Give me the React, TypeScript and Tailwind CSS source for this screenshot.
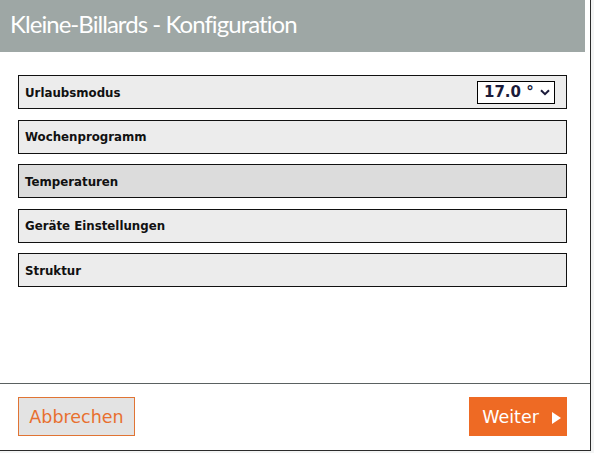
import React from 'react';

const rows = [
  { label: 'Urlaubsmodus', select: true },
  { label: 'Wochenprogramm' },
  { label: 'Temperaturen', active: true },
  { label: 'Geräte Einstellungen' },
  { label: 'Struktur' },
];

export default function App() {
  return (
    <div className="w-[594px] h-[453px] bg-[#f3f4f4] overflow-hidden">
      <div className="w-[591px] h-[451px] bg-white border-r border-b border-[#2b2b2b] flex flex-col">
        <div className="h-[52px] mr-[5px] bg-[#9ea7a5] flex items-center pl-[10px] pb-[4px]">
          <h1 className="text-white text-[24px] tracking-[-0.95px] font-['Lato',sans-serif]">
            Kleine-Billards - Konfiguration
          </h1>
        </div>

        <div className="flex-1 pt-[23px] pl-[18px] flex flex-col gap-[10.5px]">
          {rows.map((r) => (
            <div
              key={r.label}
              className={`w-[549px] h-[34px] border border-[#111] flex items-center justify-between pl-[6px] pr-[11px] ${r.active ? 'bg-[#dcdcdc]' : 'bg-[#ececec]'}`}
            >
              <span className="text-[11.8px] font-bold text-[#111] font-['DejaVu_Sans',sans-serif] pt-[3px]">{r.label}</span>
              {r.select && (
                <div className="w-[78px] h-[23px] border border-black bg-white flex items-center pl-[6px] gap-[6px]">
                  <span className="text-[15px] font-bold text-[#1b1b3a] font-['DejaVu_Sans',sans-serif] leading-none">17.0 °</span>
                  <svg width="10" height="7" viewBox="0 0 10 7" fill="none">
                    <path d="M1 1.2l4 4 4-4" stroke="#1b1b3a" strokeWidth="2" />
                  </svg>
                </div>
              )}
            </div>
          ))}
        </div>

        <div className="h-[67px] border-t border-[#5a6161] flex items-start justify-between pt-[13px] pl-[18px] pr-[23px]">
          <button className="w-[117px] h-[39px] bg-[#e3e3e3] border border-[#e07434] text-[#e8702f] text-[17.5px] font-['DejaVu_Sans',sans-serif] pt-[2px]">
            Abbrechen
          </button>
          <button className="w-[98px] h-[39px] bg-[#ee6a24] text-white text-[17.5px] font-['DejaVu_Sans',sans-serif] flex items-center justify-center gap-[13px] pl-[7px] pt-[2px]">
            Weiter
            <svg width="9" height="12" viewBox="0 0 9 12">
              <path d="M0 0l9 6-9 6z" fill="#fff" />
            </svg>
          </button>
        </div>
      </div>
    </div>
  );
}
